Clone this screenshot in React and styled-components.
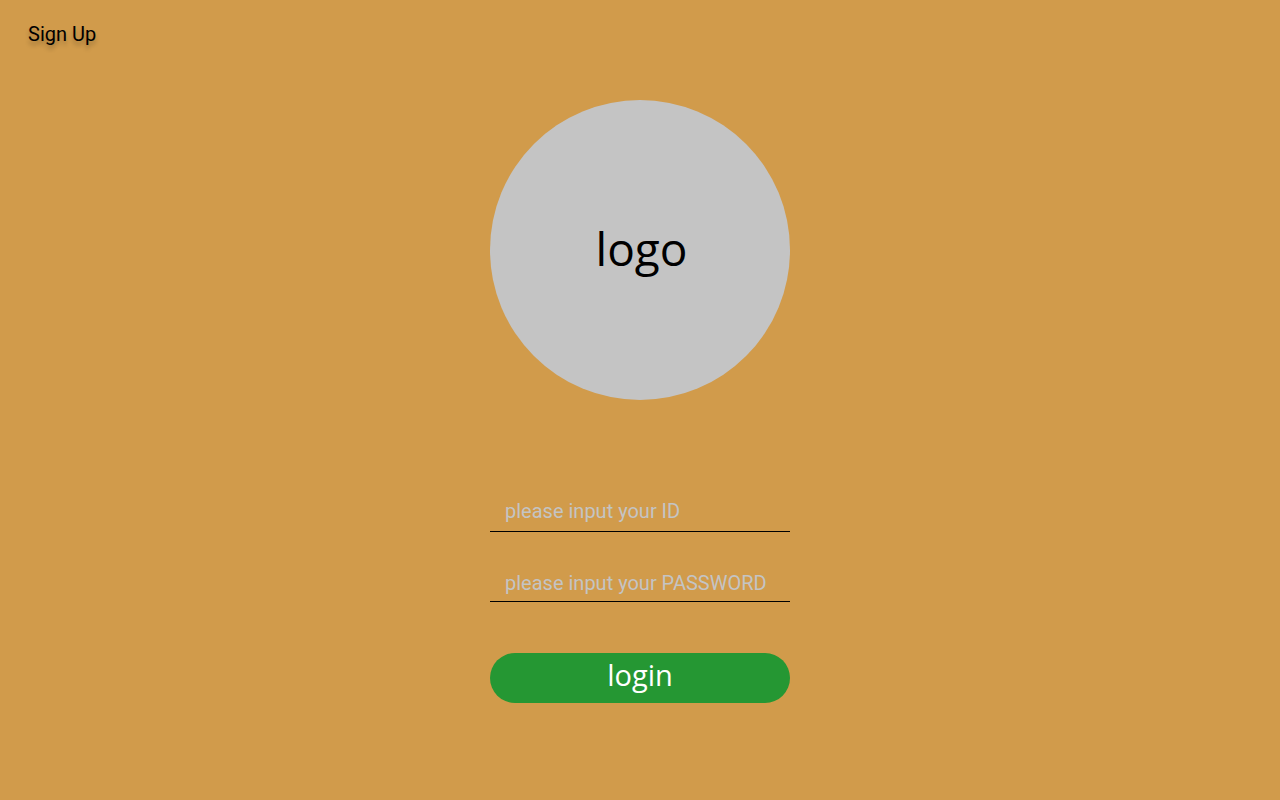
import React from 'react';
import styled, { createGlobalStyle } from 'styled-components';

const GlobalStyle = createGlobalStyle`
  html, body {
    margin: 0;
    padding: 0;
    background: #d19b4b;
    font-family: Roboto, "Liberation Sans", sans-serif;
  }
`;

const Page = styled.div`
  width: 100%;
  min-height: 800px;
  background: #d19b4b;
  display: flex;
  flex-direction: column;
`;

const Header = styled.div`
  display: flex;
  align-items: center;
  padding: 22px 28px 0;
`;

const SignUpLink = styled.button`
  border: none;
  background: none;
  padding: 0;
  font-family: Roboto, "Liberation Sans", sans-serif;
  font-size: 20px;
  line-height: 24px;
  color: #000;
  text-shadow: 0px 4px 4px rgba(0, 0, 0, 0.25);
  cursor: pointer;
`;

const Main = styled.div`
  display: flex;
  flex-direction: column;
  align-items: center;
  margin-top: 54px;
`;

const Logo = styled.div`
  box-sizing: border-box;
  width: 300px;
  height: 300px;
  padding: 0 0 4px 3px;
  border-radius: 50%;
  background: #c4c4c4;
  display: flex;
  align-items: center;
  justify-content: center;
  font-family: "Open Sans", "Noto Sans", sans-serif;
  font-size: 46px;
  color: #000;
`;

const Form = styled.form`
  display: flex;
  flex-direction: column;
  width: 300px;
  margin-top: 91px;
  gap: 29px;
`;

const Input = styled.input`
  box-sizing: border-box;
  width: 100%;
  height: 41px;
  padding: ${(p) => (p.$low ? '10px 15px 6px' : '8px 15px')};
  border: none;
  border-bottom: 1px solid #000;
  background: transparent;
  outline: none;
  font-family: Roboto, "Liberation Sans", sans-serif;
  font-size: 20px;
  line-height: 24px;
  color: #000;

  &::placeholder {
    color: #c4c4c4;
  }
`;

const LoginButton = styled.button`
  width: 300px;
  height: 50px;
  margin-top: 22px;
  border: none;
  border-radius: 25px;
  background: #259733;
  color: #fff;
  font-family: "Open Sans", "Noto Sans", sans-serif;
  font-size: 29px;
  line-height: 40px;
  padding: 0 0 6px;
  cursor: pointer;
`;

const App = () => {
  return (
    <Page>
      <GlobalStyle />
      <Header>
        <SignUpLink>Sign Up</SignUpLink>
      </Header>
      <Main>
        <Logo>logo</Logo>
        <Form onSubmit={(e) => e.preventDefault()}>
          <Input type="text" placeholder="please input your ID" />
          <Input $low type="password" placeholder="please input your PASSWORD" />
          <LoginButton type="submit">login</LoginButton>
        </Form>
      </Main>
    </Page>
  );
};

export default App;
